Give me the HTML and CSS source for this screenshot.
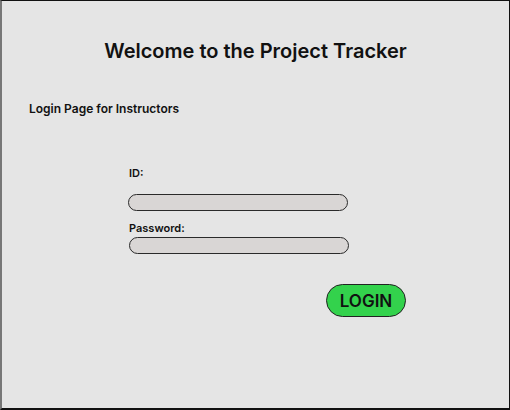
FILE: index.html
```html
<!DOCTYPE html>
<html>
<head>
<meta charset="utf-8">
<link rel="stylesheet" href="styles.css">
</head>
<body>
<div class="frame">
  <h1 class="title">Welcome to the Project Tracker</h1>
  <p class="subtitle">Login Page for Instructors</p>
  <form class="form">
    <label class="label label-id">ID:</label>
    <div class="input"></div>
    <label class="label label-pw">Password:</label>
    <div class="input input-pw"></div>
    <div class="actions">
      <button type="button" class="login">LOGIN</button>
    </div>
  </form>
</div>
</body>
</html>
```

FILE: styles.css
```css
html, body {
  margin: 0;
  padding: 0;
}
body {
  width: 510px;
  height: 410px;
  font-family: Inter, "Noto Sans", sans-serif;
  color: #111;
}
.frame {
  box-sizing: border-box;
  width: 510px;
  height: 410px;
  background: #e5e5e5;
  border-top: 1px solid #111;
  border-right: 1px solid #111;
  border-bottom: 2px solid #111;
  border-left: 2px solid #777;
  display: flex;
  flex-direction: column;
}
.title {
  margin: 38px 0 0 0;
  font-size: 20px;
  font-weight: 600;
  line-height: 24px;
  text-align: center;
  letter-spacing: 0;
}
.subtitle {
  margin: 39px 0 0 27px;
  font-size: 12px;
  font-weight: 600;
  line-height: 14px;
}
.form {
  margin: 50px 0 0 126px;
  width: 280px;
  display: flex;
  flex-direction: column;
}
.label {
  font-size: 11px;
  font-weight: 600;
  line-height: 14px;
  margin-left: 1px;
}
.label-id {
  margin-bottom: 14px;
}
.label-pw {
  margin-top: 10px;
  margin-bottom: 2px;
}
.input {
  box-sizing: border-box;
  width: 220px;
  height: 17px;
  border: 1.5px solid #2a2a2a;
  border-radius: 9px;
  background: #d9d6d5;
}
.input-pw {
  margin-left: 1px;
}
.actions {
  display: flex;
  justify-content: flex-end;
  margin-top: 30px;
}
.login {
  box-sizing: border-box;
  width: 80px;
  height: 33px;
  border: 1px solid #222;
  border-radius: 17px;
  background: #33d24c;
  font-family: Inter, "Noto Sans", sans-serif;
  font-size: 17px;
  font-weight: 600;
  color: #111;
  padding: 0;
  margin-right: 2px;
}
```
